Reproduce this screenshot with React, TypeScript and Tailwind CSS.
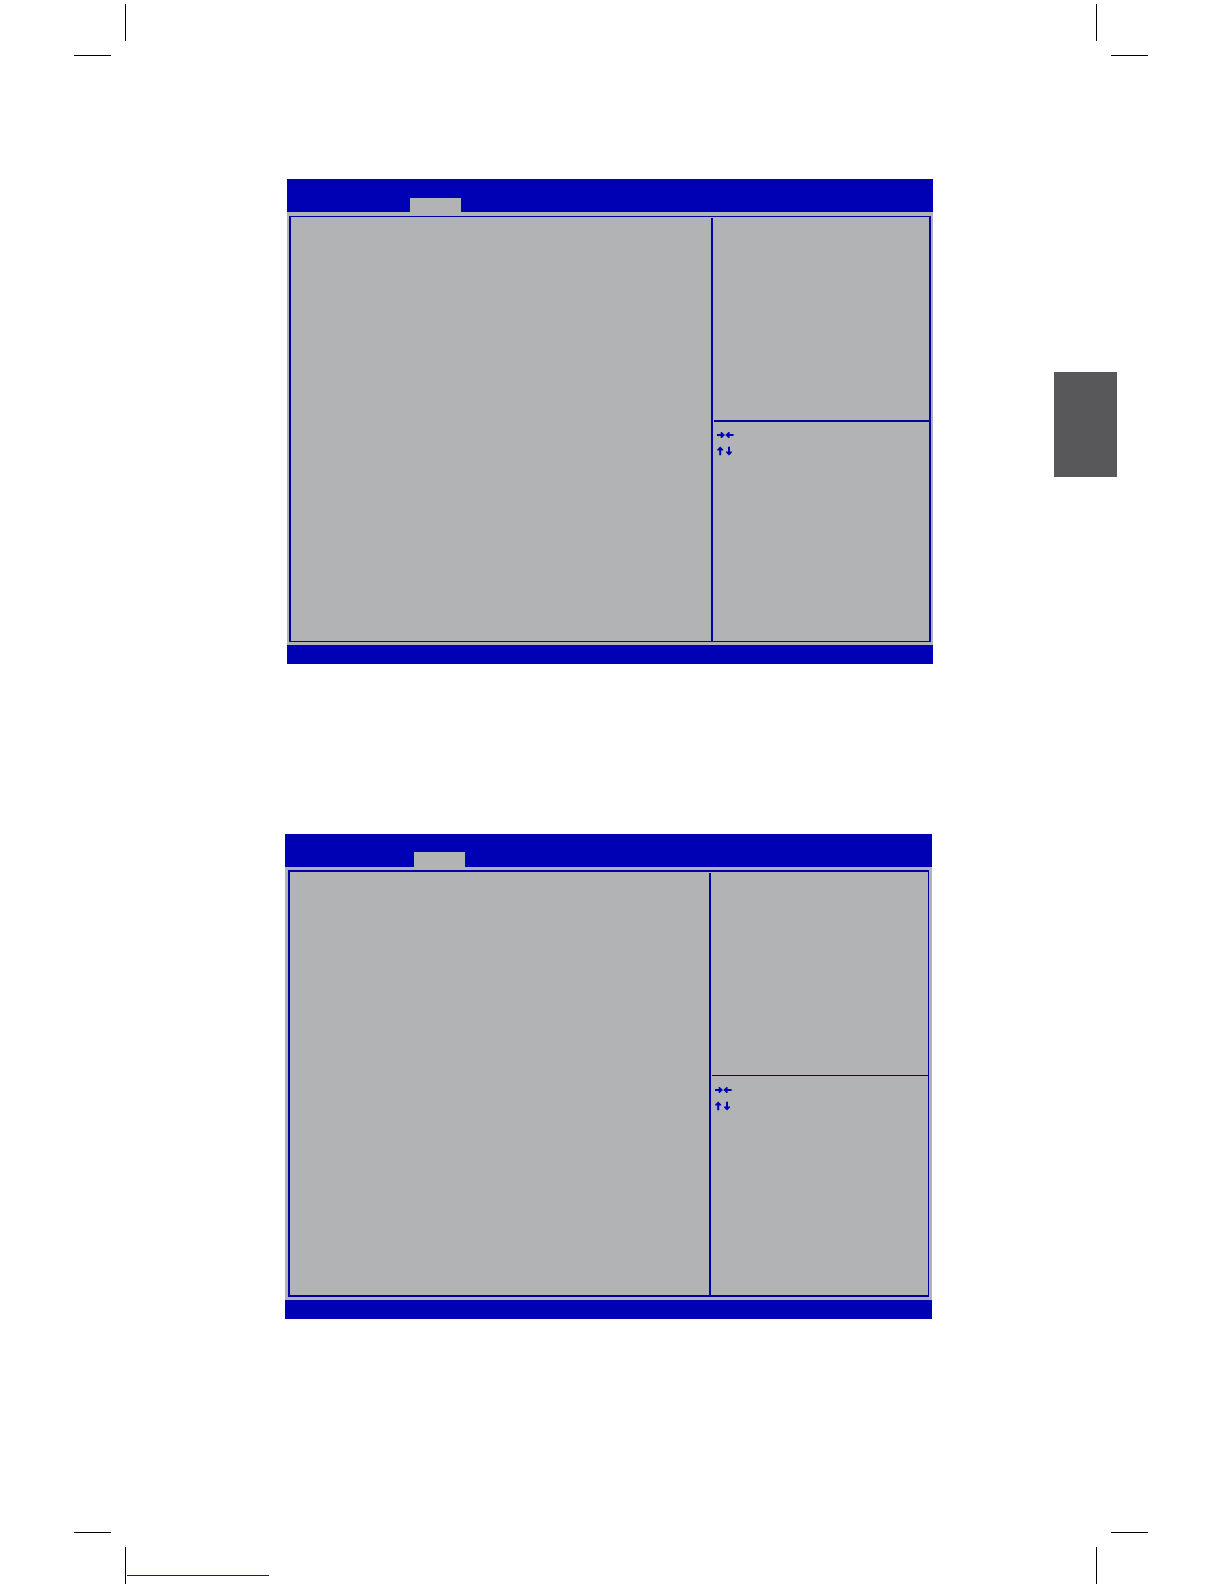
import clsx from 'clsx';

type Corner = 'top-left' | 'top-right' | 'bottom-left' | 'bottom-right';

const MARK_PATHS: Record<Corner, string> = {
  'top-left': 'M51 0h1v37h-1zM0 51h37v1H0z',
  'top-right': 'M0 0h1v37H0zM15 51h37v1H15z',
  'bottom-left': 'M51 15h1v37h-1zM0 0h37v1H0z',
  'bottom-right': 'M0 15h1v37H0zM15 0h37v1H15z',
};

function CropMark({ corner }: { corner: Corner }) {
  return (
    <svg className="w-[52px] h-[52px] shrink-0" viewBox="0 0 52 52" shapeRendering="crispEdges" aria-hidden="true">
      <path d={MARK_PATHS[corner]} fill="#000" />
    </svg>
  );
}

function KeyArrows() {
  return (
    <svg className="w-[17px] h-[26px]" viewBox="0 0 17 26" fill="#0000b0" aria-hidden="true">
      {/* left / right */}
      <path d="M-.3 3h4V.9h1.1L8 4l-3.2 3.1H3.7V5h-4z" />
      <path d="M16.6 3h-4V.9h-1.1L8.3 4l3.2 3.1h1.1V5h4z" />
      {/* up / down */}
      <path d="M2.2 24.2v-4.6H.2v-1L3.2 15.4l3 3.2v1h-2v4.6z" />
      <path d="M11 15.8v4.6H9v1l3 3.2 3-3.2v-1h-2v-4.6z" />
    </svg>
  );
}

const VARIANTS = {
  first: {
    screen: 'ml-[2px]',
    header: 'pl-[123px]',
    tab: 'h-[14px]',
    body: 'px-[2px] pt-1 pb-[3px]',
    frame: 'border-x-2 border-y min-h-[426px]',
    side: 'w-[218px]',
    help: 'border-b-2 h-[204px]',
    keys: 'pt-[9px]',
  },
  second: {
    screen: 'mr-px',
    header: 'pl-[129px]',
    tab: 'h-[15px]',
    body: 'p-[3px]',
    frame: 'border-2 border-r min-h-[427px]',
    side: 'w-[219px]',
    help: 'border-b h-[203px]',
    keys: 'pt-[10px]',
  },
};

function BiosScreen({ variant, label }: { variant: keyof typeof VARIANTS; label: string }) {
  const v = VARIANTS[variant];

  return (
    <section aria-label={label} className={clsx('flex flex-col bg-[#b1b3b4]', v.screen)}>
      <header className={clsx('flex items-end h-[33px] bg-[#0000b4]', v.header)}>
        <div className={clsx('w-[51px] bg-[#b1b3b4]', v.tab)} />
      </header>

      <div className={v.body}>
        <div className={clsx('flex border-[#0000a8]', v.frame)}>
          <div className="flex-1" />
          <div className={clsx('shrink-0 mt-px border-l-2 border-[#0000a8]', v.side)}>
            <div className={clsx('ml-px border-[#0000a8]', v.help)} />
            <div className={clsx('pl-1', v.keys)}>
              <KeyArrows />
            </div>
          </div>
        </div>
      </div>

      <footer className="h-[19px] bg-[#0000b4]" />
    </section>
  );
}

export default function App() {
  return (
    <div className="min-h-screen flex flex-col bg-white pt-1 pl-[74px] pr-[76px] font-['Liberation_Sans',sans-serif]">
      <div className="flex justify-between">
        <CropMark corner="top-left" />
        <CropMark corner="top-right" />
      </div>

      <div className="flex-1 flex items-start pr-[31px]">
        <main className="flex-1 flex flex-col gap-[170px] pt-[123px] pl-[211px] pr-[121px]">
          <BiosScreen variant="first" label="BIOS setup screen 1" />
          <BiosScreen variant="second" label="BIOS setup screen 2" />
        </main>
        {/* Chapter thumb tab */}
        <aside className="w-[63px] h-[105px] mt-[316px] shrink-0 bg-[#58585a]" />
      </div>

      <div className="flex">
        <CropMark corner="bottom-left" />
        <a href="#" aria-label="Website" className="w-[142px] h-[44px] ml-px border-b border-b-[#1414a0]" />
        <div className="ml-auto">
          <CropMark corner="bottom-right" />
        </div>
      </div>
    </div>
  );
}
